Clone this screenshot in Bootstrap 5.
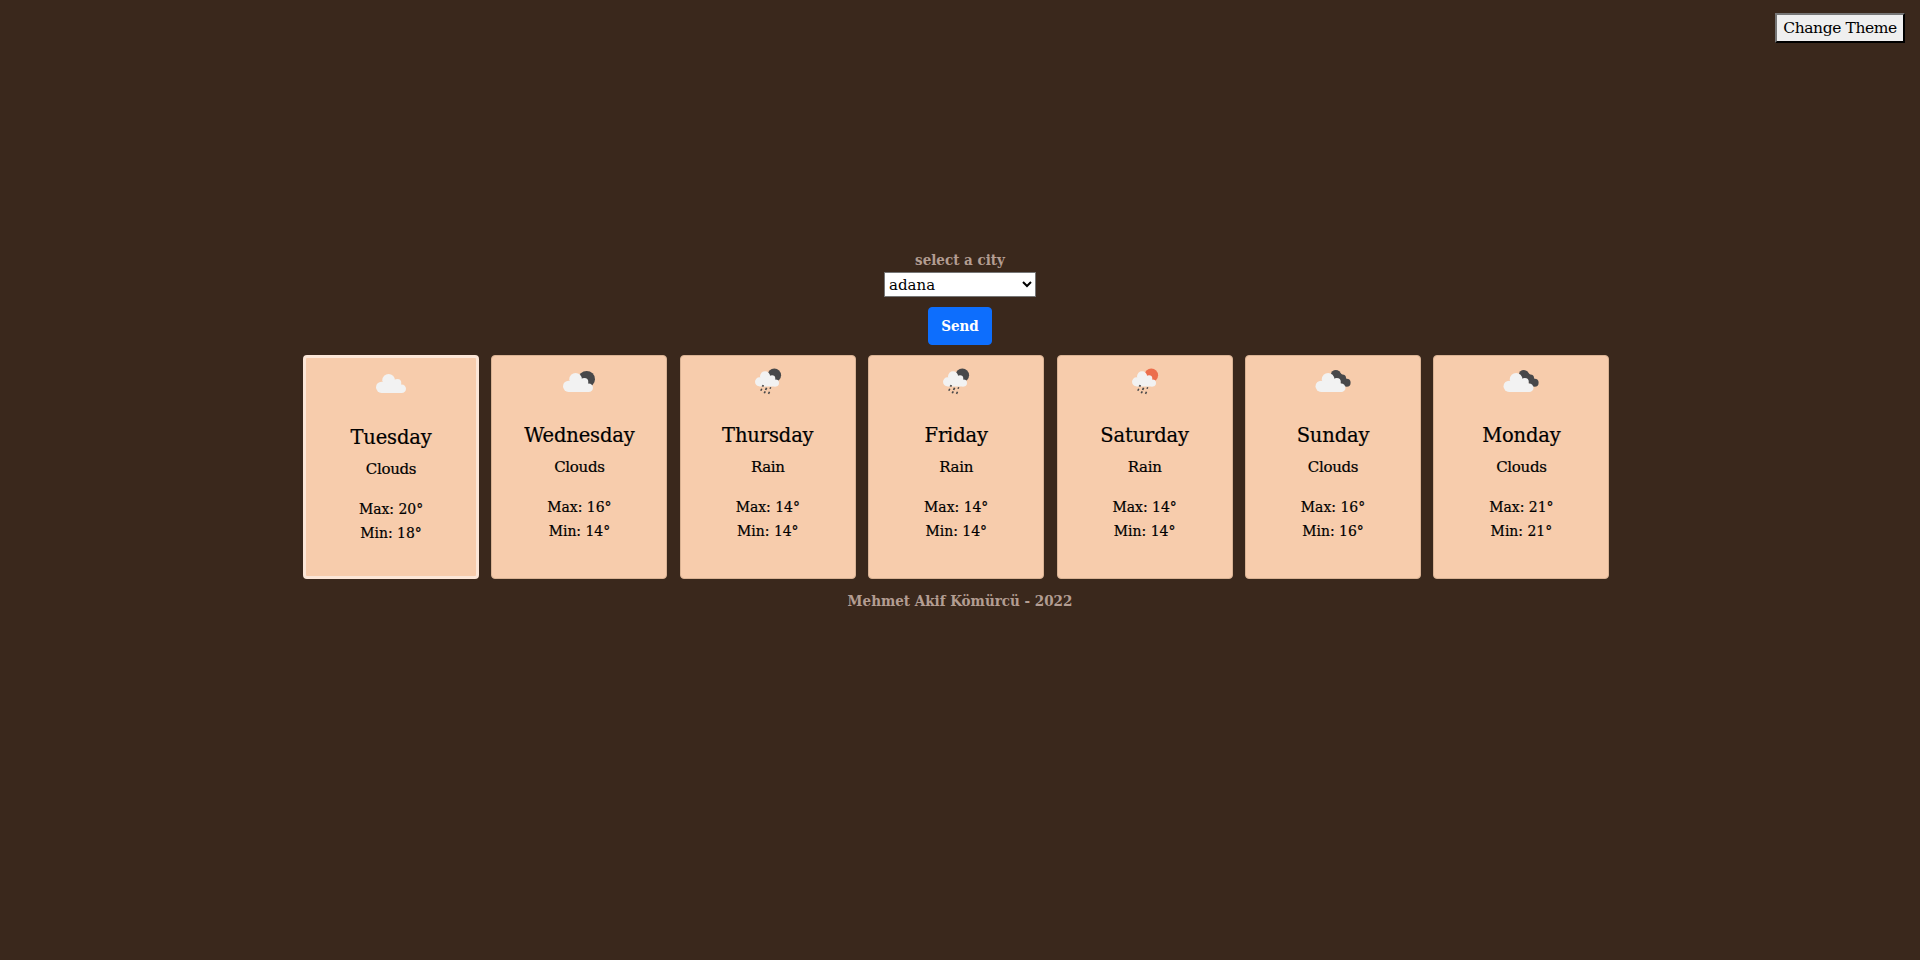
<!DOCTYPE html>
<html lang="en">
<head>
<meta charset="utf-8">
<title>Weather</title>
<link href="https://cdn.jsdelivr.net/npm/bootstrap@5.3.0/dist/css/bootstrap.min.css" rel="stylesheet">
<style>
body{background:#3a281c;color:#000;font-family:"Roboto Slab","DejaVu Serif",serif;font-size:15px;line-height:24px;letter-spacing:-.3px}
.theme-btn{width:130px;height:30px;margin:13px 15px 0 0;padding:0;border:2px outset #767676;border-color:#767676 #212121 #212121 #767676;background:#efefef;color:#000;white-space:nowrap;font-size:15.5px;letter-spacing:-.4px}
.muted-title,.send,.temps{font-family:"Roboto Slab","DejaVu Serif Condensed","DejaVu Serif",serif}
.muted-title{color:#b39d92;font-weight:700;font-size:15px;letter-spacing:0}
.city{width:152px;height:25px;padding:0;border:1px solid #767676;background:#fff;color:#000;letter-spacing:0}
.send{width:64px;height:38px;margin:10px 0;padding:0;border-radius:4px;font-weight:700;font-size:15px;letter-spacing:0;background:#0d6efd}
.picker{padding-top:205px}
.days{gap:12.4px;padding-right:7.6px}
.day{width:176px;height:224px;border-radius:4px;background:#f7ccac;border:1px solid #d9b293;-webkit-text-stroke:.2px #000}
.day.today{border:3px solid #fce6d7}
.day svg{width:50px;height:50px;-webkit-text-stroke:0}
.day h5{font-size:19.5px;line-height:24px;letter-spacing:-.15px;font-weight:400;margin:18px 0 7px}
.day p{margin:0 0 15.5px}
.temps{font-size:15.5px;letter-spacing:0}
footer{margin-top:10px}
</style>
</head>
<body>
<svg width="0" height="0" class="position-absolute">
<defs>
<g id="cloud"><circle cx="5.6" cy="13.3" r="5.6"/><circle cx="12.6" cy="6.3" r="6.3"/><circle cx="21.3" cy="9" r="4"/><circle cx="25.7" cy="14.7" r="4.3"/><path d="M5.6 19V10L8 7H20L25.7 12V19Z"/></g>
<g id="drops" fill="#484849"><path d="M18.6 30.3l1-1.5 1.5.6-.8 1.5zM17.1 34.6l1-2.2 1.4.5-1 2.2zM21.8 33.8l1-2.2 1.6.5-1 2.2zM26.3 32.5l.8-1.6 1.3.5-.7 1.6zM20.5 37l1-1.9 1.5.6-1 1.9zM24.8 37.6l1-2.2 1.4.6-1 2.2z"/></g>
<symbol id="i-cloud" viewBox="0 0 50 50"><use href="#cloud" x="10" y="16" fill="#f2f2f2"/></symbol>
<symbol id="i-few" viewBox="0 0 50 50"><circle cx="32.7" cy="23.2" r="8.3" fill="#48484a"/><use href="#cloud" x="9" y="17" fill="#f2f2f2"/></symbol>
<symbol id="i-rain-night" viewBox="0 0 50 50"><circle cx="31.3" cy="19.3" r="6.8" fill="#48484a"/><use href="#cloud" fill="#f2f2f2" transform="translate(12 15.2) scale(.8)"/><use href="#drops"/></symbol>
<symbol id="i-rain-day" viewBox="0 0 50 50"><circle cx="31.3" cy="19.3" r="6.8" fill="#ec6e4c"/><use href="#cloud" fill="#f2f2f2" transform="translate(12 15.2) scale(.8)"/><use href="#drops"/></symbol>
<symbol id="i-broken" viewBox="0 0 50 50"><g fill="#48484a"><circle cx="27.8" cy="18.8" r="4.9"/><circle cx="34.3" cy="22.3" r="3.8"/><circle cx="38.6" cy="26.8" r="4"/><path d="M25 20l6-4.5 11 11-6 4z"/></g><use href="#cloud" x="7.5" y="17" fill="#f2f2f2"/></symbol>
</defs>
</svg>
<header class="d-flex justify-content-end"><button class="theme-btn">Change Theme</button></header>
<main class="d-flex flex-column align-items-center">
<div class="picker d-flex flex-column align-items-center">
<label class="muted-title" for="city">select a city</label>
<select id="city" class="city"><option>adana</option></select>
<button class="send btn btn-primary">Send</button>
</div>
<div class="days d-flex">
<div class="day today text-center"><svg><use href="#i-cloud"/></svg><h5>Tuesday</h5><p>Clouds</p><div class="temps">Max: 20°<br>Min: 18°</div></div>
<div class="day text-center"><svg><use href="#i-few"/></svg><h5>Wednesday</h5><p>Clouds</p><div class="temps">Max: 16°<br>Min: 14°</div></div>
<div class="day text-center"><svg><use href="#i-rain-night"/></svg><h5>Thursday</h5><p>Rain</p><div class="temps">Max: 14°<br>Min: 14°</div></div>
<div class="day text-center"><svg><use href="#i-rain-night"/></svg><h5>Friday</h5><p>Rain</p><div class="temps">Max: 14°<br>Min: 14°</div></div>
<div class="day text-center"><svg><use href="#i-rain-day"/></svg><h5>Saturday</h5><p>Rain</p><div class="temps">Max: 14°<br>Min: 14°</div></div>
<div class="day text-center"><svg><use href="#i-broken"/></svg><h5>Sunday</h5><p>Clouds</p><div class="temps">Max: 16°<br>Min: 16°</div></div>
<div class="day text-center"><svg><use href="#i-broken"/></svg><h5>Monday</h5><p>Clouds</p><div class="temps">Max: 21°<br>Min: 21°</div></div>
</div>
<footer class="muted-title">Mehmet Akif Kömürcü - 2022</footer>
</main>
<script src="https://cdn.jsdelivr.net/npm/bootstrap@5.3.0/dist/js/bootstrap.bundle.min.js"></script>
</body>
</html>
